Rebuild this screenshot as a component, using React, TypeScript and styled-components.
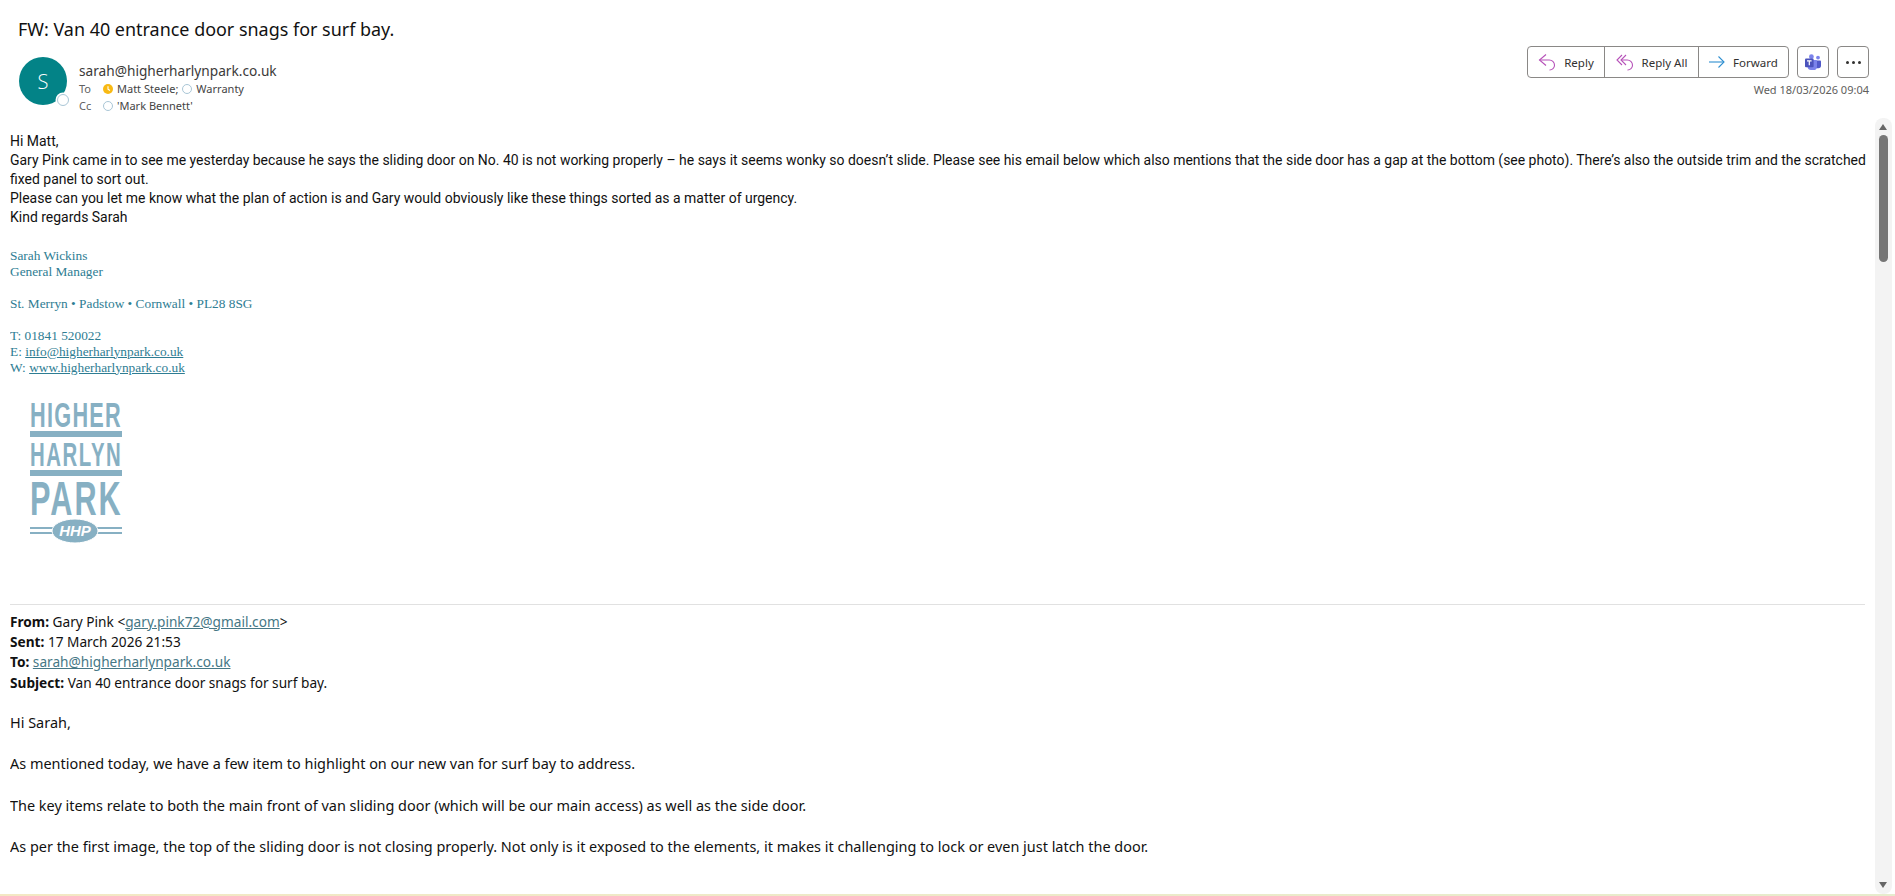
import styled, { createGlobalStyle } from "styled-components";

const GlobalStyle = createGlobalStyle`
    html, body {
        margin: 0;
        padding: 0;
        height: 100%;
        background: #fff;
        overflow: hidden;
    }
`;

const ReplyIcon = () => (
    <svg width="18" height="18" viewBox="0 0 18 18" fill="none" stroke="#b650b8" strokeWidth="1.1">
        <path d="M8 1.5 1.5 7 8 12.5" />
        <path d="M1.5 7H11a5.2 5.2 0 0 1 5.5 5.2A4.8 4.8 0 0 1 11.5 17" />
    </svg>
);

const ReplyAllIcon = () => (
    <svg width="18" height="18" viewBox="0 0 18 18" fill="none" stroke="#b650b8" strokeWidth="1.1">
        <path d="M6 2 1 7l5 5" />
        <path d="M10 2 5 7l5 5" />
        <path d="M5 7h6a5.2 5.2 0 0 1 5.5 5.2A4.8 4.8 0 0 1 11.5 17" />
    </svg>
);

const ForwardIcon = () => (
    <svg width="16" height="12" viewBox="0 0 16 12" fill="none" stroke="#2f8fd0" strokeWidth="1.1">
        <path d="M0 6h15" />
        <path d="M9.5.5 15 6l-5.5 5.5" />
    </svg>
);

const TeamsIcon = () => (
    <svg width="16" height="16" viewBox="0 0 16 16">
        <circle cx="13" cy="3.6" r="1.9" fill="#7b83eb" />
        <path d="M10 6.5h5.2c.4 0 .8.4.8.8v4.3a2.6 2.6 0 0 1-2.6 2.6H10z" fill="#5059c9" />
        <circle cx="6.4" cy="2.7" r="2.4" fill="#7b83eb" />
        <path d="M2.5 6h8.6c.5 0 .9.4.9.9v5.5a3.6 3.6 0 0 1-3.6 3.6H6a3.6 3.6 0 0 1-3.5-3z" fill="#7b83eb" />
        <rect x="0" y="4.6" width="8.6" height="8.6" rx="1" fill="#4b53bc" />
        <path d="M2 6.8h4.6M4.3 6.8v4.4" stroke="#fff" strokeWidth="1.2" fill="none" />
    </svg>
);

const ClockDot = () => (
    <svg width="10" height="10" viewBox="0 0 11 11">
        <circle cx="5.5" cy="5.5" r="5.5" fill="#f8b913" />
        <path d="M5.5 2.5v3.2l2.2 1.4" stroke="#fff" strokeWidth="1.2" fill="none" />
    </svg>
);

const Logo = () => (
    <svg width="92" height="148" viewBox="0 -6 92 148" fill="#87b0c3">
        <LogoWord transform="scale(0.62 1)" x="0" y="26" fontSize="35" letterSpacing="2" textLength="148.4" lengthAdjust="spacing">HIGHER</LogoWord>
        <rect x="0" y="30" width="92" height="6" />
        <LogoWord transform="scale(0.6 1)" x="0" y="65" fontSize="34" letterSpacing="2" textLength="153.3" lengthAdjust="spacing">HARLYN</LogoWord>
        <rect x="0" y="69" width="92" height="6" />
        <LogoWord transform="scale(0.626 1)" x="0" y="114" fontSize="49" letterSpacing="2" textLength="147" lengthAdjust="spacing">PARK</LogoWord>
        <rect x="0" y="126" width="92" height="2" />
        <rect x="0" y="131" width="92" height="2" />
        <ellipse cx="45" cy="130" rx="23" ry="12" stroke="#fff" strokeWidth="1" />
        <HhpMark x="45" y="135" textAnchor="middle" fontSize="15">HHP</HhpMark>
    </svg>
);

export default function App() {
    return (
        <>
            <GlobalStyle />
            <Page>
                <Title>FW: Van 40 entrance door snags for surf bay.</Title>
                <Header>
                    <Avatar>
                        S
                        <PresenceBadge />
                    </Avatar>
                    <HeaderInfo>
                        <Sender>sarah@higherharlynpark.co.uk</Sender>
                        <RecipientRow>
                            <RecipientLabel>To</RecipientLabel>
                            <ClockDot />
                            <span>Matt Steele;</span>
                            <PresenceDot />
                            <span>Warranty</span>
                        </RecipientRow>
                        <RecipientRow>
                            <RecipientLabel>Cc</RecipientLabel>
                            <PresenceDot />
                            <span>'Mark Bennett'</span>
                        </RecipientRow>
                    </HeaderInfo>
                    <Actions>
                        <ActionsRow>
                            <ButtonGroup>
                                <GroupButton $width={76}><ReplyIcon />Reply</GroupButton>
                                <GroupButton $width={94}><ReplyAllIcon />Reply All</GroupButton>
                                <GroupButton $width={90}><ForwardIcon />Forward</GroupButton>
                            </ButtonGroup>
                            <IconButton><TeamsIcon /></IconButton>
                            <IconButton><Dots><i /><i /><i /></Dots></IconButton>
                        </ActionsRow>
                        <DateText>Wed 18/03/2026 09:04</DateText>
                    </Actions>
                </Header>
                <BodyArea>
                    <Message>
                        <BodyLine>Hi Matt,</BodyLine>
                        <BodyLine>Gary Pink came in to see me yesterday because he says the sliding door on No. 40 is not working properly – he says it seems wonky so doesn’t slide. Please see his email below which also mentions that the side door has a gap at the bottom (see photo). There’s also the outside trim and the scratched fixed panel to sort out.</BodyLine>
                        <BodyLine>Please can you let me know what the plan of action is and Gary would obviously like these things sorted as a matter of urgency.</BodyLine>
                        <BodyLine>Kind regards Sarah</BodyLine>
                        <Signature>
                            <div>Sarah Wickins</div>
                            <div>General Manager</div>
                            <SigGap />
                            <div>St. Merryn • Padstow • Cornwall • PL28 8SG</div>
                            <SigGap />
                            <div>T: 01841 520022</div>
                            <div>E: <SigLink>info@higherharlynpark.co.uk</SigLink></div>
                            <div>W: <SigLink>www.higherharlynpark.co.uk</SigLink></div>
                        </Signature>
                        <LogoWrap><Logo /></LogoWrap>
                        <Divider />
                        <Quoted>
                            <div><b>From:</b> Gary Pink &lt;<MailLink>gary.pink72@gmail.com</MailLink>&gt;</div>
                            <div><b>Sent:</b> 17 March 2026 21:53</div>
                            <div><b>To:</b> <MailLink>sarah@higherharlynpark.co.uk</MailLink></div>
                            <div><b>Subject:</b> Van 40 entrance door snags for surf bay.</div>
                        </Quoted>
                        <Para>Hi Sarah,</Para>
                        <Para>As mentioned today, we have a few item to highlight on our new van for surf bay to address.</Para>
                        <Para>The key items relate to both the main front of van sliding door (which will be our main access) as well as the side door.</Para>
                        <Para>As per the first image, the top of the sliding door is not closing properly. Not only is it exposed to the elements, it makes it challenging to lock or even just latch the door.</Para>
                    </Message>
                    <Scrollbar>
                        <ArrowUp />
                        <ScrollThumb />
                        <ArrowDown />
                    </Scrollbar>
                </BodyArea>
                <BottomEdge />
            </Page>
        </>
    );
}

const LogoWord = styled.text`
    font-family: "Liberation Sans", sans-serif;
    font-weight: 700;
`;

const HhpMark = styled.text`
    font-family: "Liberation Sans", sans-serif;
    font-weight: 700;
    font-style: italic;
    fill: #fff;
`;

const Page = styled.div`
    height: 896px;
    display: flex;
    flex-direction: column;
    font-family: "Roboto", "Noto Sans", sans-serif;
    color: #1a1a1a;
    overflow: hidden;
`;

const Title = styled.div`
    padding: 17px 0 0 18px;
    height: 29px;
    font-family: "Noto Sans", sans-serif;
    font-size: 17.95px;
    line-height: 24px;
    color: #111;
`;

const Header = styled.div`
    display: flex;
    height: 72px;
    padding: 0 26px 0 19px;
`;

const Avatar = styled.div`
    position: relative;
    width: 48px;
    height: 48px;
    margin-top: 11px;
    border-radius: 50%;
    background: #038387;
    color: #fff;
    font-family: "Open Sans", sans-serif;
    font-weight: 300;
    font-size: 20px;
    display: flex;
    align-items: center;
    justify-content: center;
    flex-shrink: 0;
`;

const PresenceBadge = styled.span`
    position: absolute;
    right: -2px;
    bottom: -1px;
    width: 10px;
    height: 10px;
    border-radius: 50%;
    border: 1.5px solid #a9c6d6;
    background: #fff;
    box-shadow: 0 0 0 1.5px #fff;
`;

const HeaderInfo = styled.div`
    margin-left: 12px;
    padding-top: 15px;
    flex: 1;
`;

const Sender = styled.div`
    font-family: "Noto Sans", sans-serif;
    font-size: 13.67px;
    line-height: 19px;
    color: #3b3a39;
`;

const RecipientRow = styled.div`
    display: flex;
    align-items: center;
    gap: 4px;
    font-family: "Noto Sans", sans-serif;
    font-size: 11px;
    line-height: 17px;
    color: #444;
`;

const RecipientLabel = styled.span`
    width: 20px;
    color: #616161;
`;

const PresenceDot = styled.span`
    width: 8px;
    height: 8px;
    border-radius: 50%;
    border: 1px solid #a9c6d6;
    background: #fff;
`;

const Actions = styled.div`
    display: flex;
    flex-direction: column;
    align-items: flex-end;
`;

const ActionsRow = styled.div`
    display: flex;
    gap: 8px;
`;

const ButtonGroup = styled.div`
    display: flex;
    height: 32px;
    box-sizing: border-box;
    border: 1px solid #8a8886;
    border-radius: 4px;
`;

const GroupButton = styled.div<{ $width: number }>`
    display: flex;
    align-items: center;
    justify-content: center;
    gap: 8px;
    width: ${({ $width }) => $width}px;
    box-sizing: border-box;
    font-family: "Noto Sans", sans-serif;
    font-size: 11.5px;
    color: #323130;

    & + & {
        border-left: 1px solid #8a8886;
    }
`;

const IconButton = styled.div`
    width: 32px;
    height: 32px;
    box-sizing: border-box;
    border: 1px solid #8a8886;
    border-radius: 4px;
    display: flex;
    align-items: center;
    justify-content: center;
`;

const Dots = styled.div`
    display: flex;
    gap: 3px;

    i {
        width: 3px;
        height: 3px;
        border-radius: 50%;
        background: #323130;
    }
`;

const DateText = styled.div`
    margin-top: 4px;
    font-family: "Noto Sans", sans-serif;
    font-size: 11px;
    line-height: 16px;
    color: #605e5c;
`;

const BodyArea = styled.div`
    flex: 1;
    display: flex;
    justify-content: space-between;
    min-height: 0;
    padding: 0 3px 0 10px;
`;

const Message = styled.div`
    width: 1860px;
    overflow: hidden;
    padding-top: 14px;
    font-size: 13.97px;
    line-height: 18.9px;
    color: #111;
`;

const BodyLine = styled.div``;

const Signature = styled.div`
    margin-top: 21px;
    font-family: "Liberation Serif", serif;
    font-size: 13.33px;
    line-height: 16px;
    color: #2e7d93;
`;

const SigGap = styled.div`
    height: 16px;
`;

const SigLink = styled.span`
    text-decoration: underline;
`;

const LogoWrap = styled.div`
    margin: 19px 0 0 20px;
    height: 148px;
    line-height: 0;
`;

const Divider = styled.div`
    margin: 61px 5px 0 0;
    height: 1px;
    background: #e1e1e1;
`;

const Quoted = styled.div`
    margin: 7px 0 -1px;
    font-family: "Noto Sans", sans-serif;
    font-size: 13.67px;
    line-height: 20.4px;
    color: #111;
`;

const MailLink = styled.span`
    color: #467886;
    text-decoration: underline;
`;

const Para = styled.div`
    margin-top: 20.75px;
    font-family: "Noto Sans", sans-serif;
    font-size: 14.44px;
    line-height: 20.75px;
`;

const Scrollbar = styled.div`
    position: relative;
    width: 17px;
    flex-shrink: 0;
    background: #f3f3f3;
    border-radius: 8px;
`;

const ArrowUp = styled.span`
    position: absolute;
    top: 6px;
    left: 4px;
    border: 4.5px solid transparent;
    border-top: 0;
    border-bottom: 6px solid #666;
`;

const ArrowDown = styled.span`
    position: absolute;
    bottom: 6px;
    left: 4px;
    border: 4.5px solid transparent;
    border-bottom: 0;
    border-top: 6px solid #666;
`;

const ScrollThumb = styled.div`
    position: absolute;
    top: 17px;
    left: 4px;
    width: 9px;
    height: 127px;
    border-radius: 5px;
    background: #767676;
`;

const BottomEdge = styled.div`
    height: 2px;
    background: linear-gradient(90deg, #f3e8c4, #e6eccd);
`;
